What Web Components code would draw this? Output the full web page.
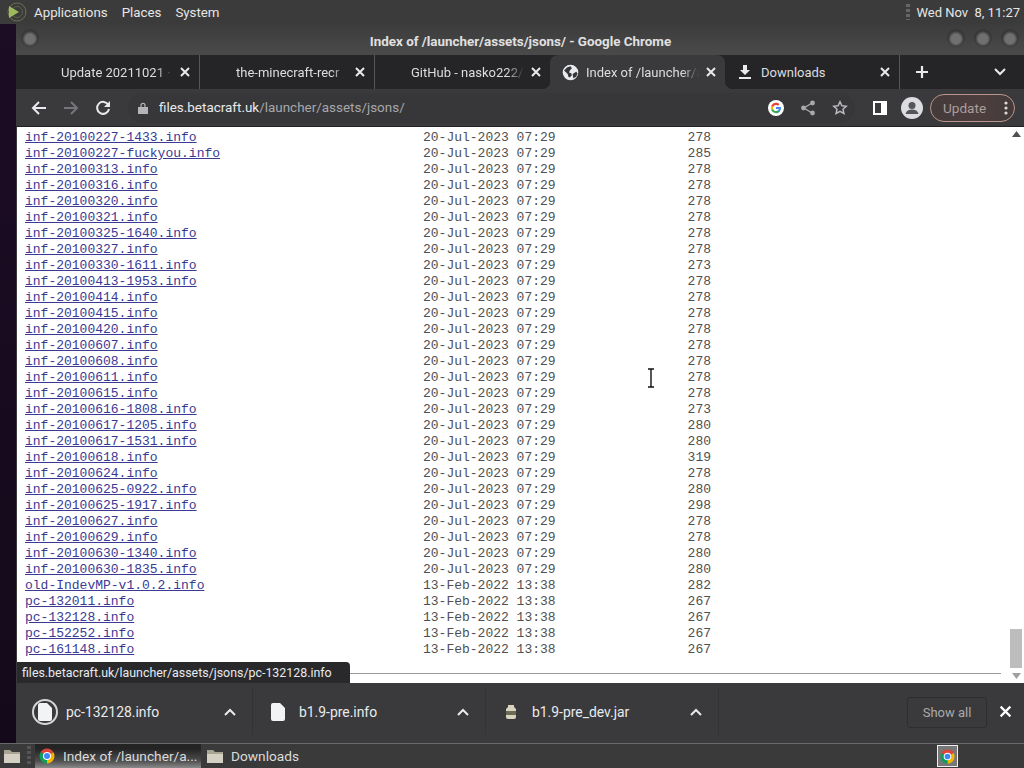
<!DOCTYPE html>
<html>
<head>
<meta charset="utf-8">
<title>Index of /launcher/assets/jsons/</title>
<style>
    html, body { margin: 0; height: 100%; background: #1a0b1f; overflow: hidden; }
    body { font-family: Roboto, sans-serif; }
    #screen { position: relative; width: 1024px; height: 768px; display: flex; flex-direction: column; overflow: hidden; }
    #middle { flex: 1; display: flex; min-height: 0; }
    #cursor { position: absolute; left: 647px; top: 368px; }
</style>
</head>
<body>
<div id="screen">
    <top-panel></top-panel>
    <div id="middle">
        <desktop-strip></desktop-strip>
        <browser-window>Index of /launcher/assets/jsons/ - Google Chrome</browser-window>
    </div>
    <task-bar></task-bar>
    <svg id="cursor" width="8" height="20" viewBox="0 0 8 20">
        <path d="M1 1h6M4 1v18M1 19h6" fill="none" stroke="#fff" stroke-width="3.4"/>
        <path d="M1 1h6M4 1v18M1 19h6" fill="none" stroke="#111" stroke-width="1.4"/>
    </svg>
</div>

<script>
const icons = {
    chrome: `<svg width="20" height="20" viewBox="0 0 24 24"><path fill="#db4437" d="M12 12 3.34 7A10 10 0 0 1 20.66 7Z"/><path fill="#f4b400" d="M12 12 20.66 7A10 10 0 0 1 12 22Z"/><path fill="#0f9d58" d="M12 12V22A10 10 0 0 1 3.34 7Z"/><circle cx="12" cy="12" r="5.4" fill="#fff"/><circle cx="12" cy="12" r="4" fill="#4285f4"/></svg>`,
    globe: `<svg width="17" height="17" viewBox="0 0 24 24"><circle cx="12" cy="12" r="11" fill="#e8eaed"/><path fill="#35363a" d="M3 9l4-4 5-2 2 3-3 3-1 3 3 1 1 3-3 3-2-1-1-4zM15 14l5-3 2 2-2 5-4 2z"/></svg>`,
    download: `<svg width="16" height="16" viewBox="0 0 16 16"><path fill="#e8eaed" d="M6 1h4v5h3l-5 5-5-5h3zM2 13h12v2H2z"/></svg>`,
    close: `<svg width="12" height="12" viewBox="0 0 12 12"><path d="M2 2l8 8M10 2l-8 8" stroke="#e8eaed" stroke-width="2" fill="none"/></svg>`,
    file: `<svg width="14" height="18" viewBox="0 0 14 18"><path fill="#f1f3f4" d="M2 0h7l5 5v11a2 2 0 0 1-2 2H2a2 2 0 0 1-2-2V2a2 2 0 0 1 2-2z"/></svg>`,
    jar: `<svg width="10" height="14" viewBox="0 0 10 14"><path fill="#d9d4c0" d="M2 0h6v2l2 2v8a2 2 0 0 1-2 2H2a2 2 0 0 1-2-2V4l2-2z"/><path fill="#6b6a55" d="M0 6h10v4H0z"/></svg>`,
    chevUp: `<svg width="12" height="8" viewBox="0 0 12 8"><path d="M1 7l5-5 5 5" stroke="#e8eaed" stroke-width="2" fill="none"/></svg>`,
    folder: `<svg width="18" height="16" viewBox="0 0 18 16"><path fill="#a8a594" d="M1 2h6l2 2h8v11H1z"/><path fill="#d4d1c4" d="M1 6h16v9H1z"/></svg>`
};

class TopPanel extends HTMLElement {
    constructor() {
        super();
        this.attachShadow({ mode: 'open' });
    }
    connectedCallback() {
        this.shadowRoot.innerHTML = `
            <style>
                :host { display: flex; align-items: center; height: 24px; flex: none; background: #3b3b3b; color: #e6e6e6; font: 13.3px Roboto, sans-serif; padding: 0 4px 0 7px; box-sizing: border-box; }
                svg { margin-right: 7px; flex: none; }
                span { margin-right: 14px; }
                .grip { width: 4px; height: 16px; margin-right: 6px; background: repeating-linear-gradient(#666 0 3px, transparent 3px 5px); }
                .clock { margin: 0 0 0 auto; display: flex; align-items: center; font-size: 13px; }
                .clock span { margin: 0; }
            </style>
            <svg width="20" height="20" viewBox="0 0 20 20">
                <circle cx="10" cy="10" r="9" fill="none" stroke="#6c7050" stroke-width="1"/>
                <circle cx="10" cy="10" r="5.500" fill="none" stroke="#5c6048" stroke-width="1"/>
                <path d="M2 4l10 6-10 6z" fill="#9dbb5a"/>
            </svg>
            <span>Applications</span><span>Places</span><span>System</span>
            <div class="clock"><div class="grip"></div><span>Wed Nov&nbsp; 8, 11:27</span></div>
        `;
    }
}

class DesktopStrip extends HTMLElement {
    constructor() {
        super();
        this.attachShadow({ mode: 'open' });
    }
    connectedCallback() {
        this.shadowRoot.innerHTML = `
            <style>:host { display: block; width: 16px; flex: none; background: linear-gradient(#1c0c24, #14091a); }</style>
        `;
    }
}

class BrowserWindow extends HTMLElement {
    constructor() {
        super();
        this.attachShadow({ mode: 'open' });
    }
    connectedCallback() {
        this.shadowRoot.innerHTML = `
            <style>
                :host { display: flex; flex-direction: column; flex: 1; min-width: 0; background: #3a3a3c; }
                .title { display: flex; align-items: center; height: 31px; flex: none; padding: 0 5px 0 5px; box-sizing: border-box; background: linear-gradient(#3c3c3c, #4a4a4a); color: #e0e0e0; font: bold 13.4px Roboto, sans-serif; }
                .title div.text { flex: 1; text-align: center; padding: 3px 0 0 64px; white-space: nowrap; }
                .knob { width: 18px; height: 18px; border-radius: 50%; flex: none; margin: 0 0 3px 9px; background: radial-gradient(circle at 50% 55%, #707070 0 35%, #3a3a3a 58%, #353535 72%, #565656 100%); }
                .knob:first-child { margin-left: 0; }
            </style>
            <div class="title">
                <div class="knob"></div>
                <div class="text"><slot></slot></div>
                <div class="knob"></div><div class="knob"></div><div class="knob"></div>
            </div>
            <tab-strip></tab-strip>
            <nav-toolbar></nav-toolbar>
            <dir-listing></dir-listing>
            <download-bar></download-bar>
        `;
    }
}

class TabStrip extends HTMLElement {
    constructor() {
        super();
        this.attachShadow({ mode: 'open' });
    }
    connectedCallback() {
        this.shadowRoot.innerHTML = `
            <style>
                :host { display: flex; align-items: stretch; height: 34px; flex: none; background: #252527; padding-left: 9px; box-sizing: border-box; color: #e8eaed; }
                .new { margin-left: 15px; width: 18px; display: flex; align-items: center; }
                .more { margin-left: 55px; width: 24px; display: flex; align-items: center; justify-content: center; }
            </style>
            <browser-tab sep>Update 20211021 · r</browser-tab>
            <browser-tab sep>the-minecraft-recr</browser-tab>
            <browser-tab>GitHub - nasko222/</browser-tab>
            <browser-tab active><span slot="icon">${icons.globe}</span>Index of /launcher/a</browser-tab>
            <browser-tab sep nofade><span slot="icon">${icons.download}</span>Downloads</browser-tab>
            <div class="new"><svg width="14" height="14" viewBox="0 0 14 14"><path d="M7 1v12M1 7h12" stroke="#e8eaed" stroke-width="2.2"/></svg></div>
            <div class="more"><svg width="12" height="8" viewBox="0 0 12 8"><path d="M1 1l5 5 5-5" stroke="#e8eaed" stroke-width="2" fill="none"/></svg></div>
        `;
    }
}

class BrowserTab extends HTMLElement {
    constructor() {
        super();
        this.attachShadow({ mode: 'open' });
    }
    connectedCallback() {
        this.shadowRoot.innerHTML = `
            <style>
                :host { display: flex; align-items: center; width: 175px; flex: none; box-sizing: border-box; padding: 0 8px 0 12px; font: 13px Roboto, sans-serif; color: #dcdde0; position: relative; }
                :host([active]) { background: #3a3a3c; border-radius: 8px 8px 0 0; }
                :host([active])::before, :host([active])::after { content: ""; position: absolute; bottom: 0; width: 8px; height: 8px; }
                :host([active])::before { left: -8px; background: radial-gradient(circle at 0 0, transparent 8px, #3a3a3c 8.5px); }
                :host([active])::after { right: -8px; background: radial-gradient(circle at 100% 0, transparent 8px, #3a3a3c 8.5px); }
                :host([sep]) { border-right: 1px solid #55555a; }
                .ic { width: 24px; height: 17px; flex: none; display: flex; align-items: center; }
                ::slotted([slot=icon]) { display: flex; }
                .label { flex: 1; min-width: 0; overflow: hidden; white-space: nowrap; -webkit-mask-image: linear-gradient(to right, #000 85%, transparent 100%); mask-image: linear-gradient(to right, #000 85%, transparent 100%); }
                :host([nofade]) .label { -webkit-mask-image: none; mask-image: none; }
                .x { flex: none; display: flex; margin-left: 6px; }
            </style>
            <div class="ic"><slot name="icon"></slot></div>
            <div class="label"><slot></slot></div>
            <div class="x">${icons.close}</div>
        `;
    }
}

class NavToolbar extends HTMLElement {
    constructor() {
        super();
        this.attachShadow({ mode: 'open' });
    }
    connectedCallback() {
        this.shadowRoot.innerHTML = `
            <style>
                :host { display: flex; align-items: center; height: 38px; flex: none; box-sizing: border-box; background: #3a3a3c; border-bottom: 1px solid #222; padding: 0 9px 0 14px; font: 13.45px Roboto, sans-serif; color: #e8eaed; }
                .btn { width: 18px; height: 18px; flex: none; margin-right: 14px; display: flex; align-items: center; justify-content: center; }
                .omni { flex: none; width: 727px; height: 30px; margin-left: 2px; border-radius: 15px; background: #37373a; display: flex; align-items: center; box-sizing: border-box; padding-left: 10px; }
                .lock { margin-right: 11px; display: flex; }
                .url { flex: 1; white-space: nowrap; }
                .url i { font-style: normal; color: #a6a7aa; }
                .end { display: flex; align-items: center; gap: 15px; margin-right: 7px; }
                .end svg { display: block; }
                .side { margin-left: 18px; display: flex; }
                .avatar { margin-left: 14px; display: flex; }
                .update { margin-left: 7px; width: 85px; height: 28px; box-sizing: border-box; border: 1px solid #b9958d; border-radius: 14px; background: linear-gradient(90deg, #443a3a, #4d3e3e 60%, #433a3a); color: #ab9e9c; display: flex; align-items: center; padding: 0 6px 0 12px; justify-content: space-between; font-size: 13.6px; }
            </style>
            <div class="btn"><svg width="16" height="16" viewBox="0 0 16 16"><path d="M15 8H2M8 2 2 8l6 6" stroke="#e8eaed" stroke-width="2" fill="none"/></svg></div>
            <div class="btn"><svg width="16" height="16" viewBox="0 0 16 16"><path d="M1 8h13M8 2l6 6-6 6" stroke="#75767a" stroke-width="2" fill="none"/></svg></div>
            <div class="btn"><svg width="16" height="16" viewBox="0 0 16 16"><path d="M13.4 5A6 6 0 1 0 14 9" stroke="#e8eaed" stroke-width="2" fill="none"/><path d="M15 1v6H9z" fill="#e8eaed"/></svg></div>
            <div class="omni">
                <span class="lock"><svg width="10" height="12" viewBox="0 0 10 12"><path fill="#b4b5b8" d="M0 5h10v7H0zM2.4 5V3.4a2.6 2.6 0 0 1 5.2 0V5H6.4V3.4a1.4 1.4 0 0 0-2.8 0V5z"/></svg></span>
                <span class="url">files.betacraft.uk<i>/launcher/assets/jsons/</i></span>
                <div class="end">
                    <svg width="16" height="16" viewBox="0 0 24 24"><circle cx="12" cy="12" r="12" fill="#fff"/><g transform="translate(3.6 3.6) scale(.7)"><path fill="#4285F4" d="M22.56 12.25c0-.78-.07-1.53-.2-2.25H12v4.26h5.92c-.26 1.37-1.04 2.53-2.21 3.31v2.77h3.57c2.08-1.92 3.28-4.74 3.28-8.09z"/><path fill="#34A853" d="M12 23c2.97 0 5.46-.98 7.28-2.66l-3.57-2.77c-.98.66-2.23 1.06-3.71 1.06-2.86 0-5.29-1.93-6.16-4.53H2.18v2.84C3.99 20.53 7.7 23 12 23z"/><path fill="#FBBC05" d="M5.84 14.09c-.22-.66-.35-1.36-.35-2.09s.13-1.43.35-2.09V7.07H2.18C1.43 8.55 1 10.22 1 12s.43 3.45 1.18 4.93l3.66-2.84z"/><path fill="#EA4335" d="M12 5.38c1.62 0 3.06.56 4.21 1.64l3.15-3.15C17.45 2.09 14.97 1 12 1 7.7 1 3.99 3.47 2.18 7.07l3.66 2.84c.87-2.6 3.3-4.53 6.16-4.53z"/></g></svg>
                    <svg width="18" height="16" viewBox="0 0 18 16"><path d="M13 3 5 8l8 5" stroke="#a8a9ac" stroke-width="1.4" fill="none"/><circle cx="13.5" cy="3" r="2.4" fill="#a8a9ac"/><circle cx="4.5" cy="8" r="2.4" fill="#a8a9ac"/><circle cx="13.5" cy="13" r="2.4" fill="#a8a9ac"/></svg>
                    <svg width="16" height="16" viewBox="0 0 16 16"><path d="M8 1.8l1.9 4 4.3.5-3.2 2.9.9 4.3L8 11.3l-3.9 2.2.9-4.3L1.800 6.300l4.300-.5z" stroke="#b8b9bc" stroke-width="1.5" fill="none"/></svg>
                </div>
            </div>
            <div class="side"><svg width="14" height="14" viewBox="0 0 14 14"><path fill-rule="evenodd" fill="#fff" d="M0 0h14v14H0zM2 2v10h6V2z"/></svg></div>
            <div class="avatar"><svg width="22" height="22" viewBox="0 0 22 22"><circle cx="11" cy="11" r="11" fill="#dcdde0"/><circle cx="11" cy="8.500" r="3.500" fill="#54565c"/><path d="M4.500 17c.6-3 3.400-4.400 6.500-4.400s5.900 1.400 6.500 4.400z" fill="#54565c"/></svg></div>
            <div class="update"><span>Update</span><svg width="4" height="14" viewBox="0 0 4 14"><circle cx="2" cy="2" r="1.600" fill="#e0d8d6"/><circle cx="2" cy="7" r="1.600" fill="#e0d8d6"/><circle cx="2" cy="12" r="1.600" fill="#e0d8d6"/></svg></div>
        `;
    }
}

const july = '20-Jul-2023 07:29';
const feb = '13-Feb-2022 13:38';
const files = [
    ['inf-20100227-1433.info', july, 278], ['inf-20100227-fuckyou.info', july, 285],
    ['inf-20100313.info', july, 278], ['inf-20100316.info', july, 278],
    ['inf-20100320.info', july, 278], ['inf-20100321.info', july, 278],
    ['inf-20100325-1640.info', july, 278], ['inf-20100327.info', july, 278],
    ['inf-20100330-1611.info', july, 273], ['inf-20100413-1953.info', july, 278],
    ['inf-20100414.info', july, 278], ['inf-20100415.info', july, 278],
    ['inf-20100420.info', july, 278], ['inf-20100607.info', july, 278],
    ['inf-20100608.info', july, 278], ['inf-20100611.info', july, 278],
    ['inf-20100615.info', july, 278], ['inf-20100616-1808.info', july, 273],
    ['inf-20100617-1205.info', july, 280], ['inf-20100617-1531.info', july, 280],
    ['inf-20100618.info', july, 319], ['inf-20100624.info', july, 278],
    ['inf-20100625-0922.info', july, 280], ['inf-20100625-1917.info', july, 298],
    ['inf-20100627.info', july, 278], ['inf-20100629.info', july, 278],
    ['inf-20100630-1340.info', july, 280], ['inf-20100630-1835.info', july, 280],
    ['old-IndevMP-v1.0.2.info', feb, 282], ['pc-132011.info', feb, 267],
    ['pc-132128.info', feb, 267], ['pc-152252.info', feb, 267], ['pc-161148.info', feb, 267]
];

class DirListing extends HTMLElement {
    constructor() {
        super();
        this.attachShadow({ mode: 'open' });
    }
    connectedCallback() {
        const rows = files.map(f => `
            <a href="#">${f[0]}</a><span>${f[1]}</span><span class="size">${f[2]}</span>`).join('');
        this.shadowRoot.innerHTML = `
            <style>
                :host { display: flex; flex: 1; min-height: 0; background: #fff; position: relative; margin-left: 1px; overflow: hidden; }
                .page { flex: 1; min-width: 0; padding: 3px 8px 0 8px; font: 13px/16px "Liberation Mono", monospace; color: #505050; }
                .rows { display: grid; grid-template-columns: 398px 176px 112px; justify-content: start; }
                a { color: #3a3a94; justify-self: start; }
                .size { text-align: right; }
                hr { margin: 15px 0 0 0; height: 0; border: 0; border-top: 1px solid #9a9a9a; }
                .bar { width: 15px; flex: none; display: flex; flex-direction: column; align-items: center; background: #fff; }
                .track { flex: 1; width: 100%; display: flex; flex-direction: column; justify-content: flex-end; padding: 0 2px 1px 1px; box-sizing: border-box; }
                .thumb { height: 39px; background: #bdbdbd; }
                .arrow { height: 14px; display: flex; align-items: center; justify-content: center; }
                .status { position: absolute; left: 0; bottom: 0; height: 21px; width: 333px; padding-left: 5px; box-sizing: border-box; background: #29292c; color: #e8eaed; font: 12.4px/21px Roboto, sans-serif; border-radius: 0 4px 0 0; white-space: nowrap; }
            </style>
            <div class="page">
                <div class="rows">${rows}</div>
                <hr>
            </div>
            <div class="bar">
                <div class="arrow"><svg width="9" height="6" viewBox="0 0 9 6"><path d="M4.500 0 9 6H0z" fill="#505050"/></svg></div>
                <div class="track"><div class="thumb"></div></div>
                <div class="arrow"><svg width="9" height="6" viewBox="0 0 9 6"><path d="M0 0h9L4.500 6z" fill="#a0a0a0"/></svg></div>
            </div>
            <div class="status">files.betacraft.uk/launcher/assets/jsons/pc-132128.info</div>
        `;
    }
}

class DownloadBar extends HTMLElement {
    constructor() {
        super();
        this.attachShadow({ mode: 'open' });
    }
    connectedCallback() {
        this.shadowRoot.innerHTML = `
            <style>
                :host { display: flex; align-items: stretch; height: 60px; flex: none; background: #3a3a3c; box-sizing: border-box; color: #e8eaed; font: 13.9px Roboto, sans-serif; padding: 5px 0 8px; }
                .all { margin: 9px 0 0 188px; width: 80px; height: 31px; box-sizing: border-box; border: 1px solid #2e2e30; border-radius: 3px; color: #a9aaad; font-size: 13px; display: flex; align-items: center; justify-content: center; }
                .x { margin: 0 0 0 12px; display: flex; align-items: center; }
            </style>
            <download-item style="width:237px" ring><span slot="icon">${icons.file}</span>pc-132128.info</download-item>
            <download-item style="width:233px"><span slot="icon">${icons.file}</span>b1.9-pre.info</download-item>
            <download-item style="width:233px"><span slot="icon">${icons.jar}</span>b1.9-pre_dev.jar</download-item>
            <div class="all">Show all</div>
            <div class="x"><svg width="13" height="13" viewBox="0 0 12 12"><path d="M1.500 1.500l9 9M10.500 1.500l-9 9" stroke="#fff" stroke-width="2" fill="none"/></svg></div>
        `;
    }
}

class DownloadItem extends HTMLElement {
    constructor() {
        super();
        this.attachShadow({ mode: 'open' });
    }
    connectedCallback() {
        this.shadowRoot.innerHTML = `
            <style>
                :host { display: flex; align-items: center; flex: none; box-sizing: border-box; border-right: 1px solid #333335; padding: 0 16px 0 15px; }
                .ic { width: 20px; height: 26px; margin-right: 11px; flex: none; display: flex; align-items: center; justify-content: center; }
                :host([ring]) { padding-left: 16px; }
                :host([ring]) .ic { width: 26px; border-radius: 50%; box-sizing: border-box; border: 2px solid #d5d6d8; margin-right: 8px; }
                ::slotted([slot=icon]) { display: flex; }
                .name { flex: 1; white-space: nowrap; }
                .chev { display: flex; }
            </style>
            <div class="ic"><slot name="icon"></slot></div>
            <div class="name"><slot></slot></div>
            <div class="chev">${icons.chevUp}</div>
        `;
    }
}

class TaskBar extends HTMLElement {
    constructor() {
        super();
        this.attachShadow({ mode: 'open' });
    }
    connectedCallback() {
        this.shadowRoot.innerHTML = `
            <style>
                :host { display: flex; align-items: center; height: 25px; flex: none; box-sizing: border-box; background: #3a3a3a; border-top: 1px solid #6a6a6a; color: #dcdcdc; font: 13.7px Roboto, sans-serif; }
                .show { width: 22px; display: flex; justify-content: center; margin-left: 1px; }
                .grip { width: 4px; height: 20px; margin: 0 4px 0 4px; background: repeating-linear-gradient(#555 0 3px, transparent 3px 5px); }
                .tray { margin-left: auto; display: flex; align-items: center; height: 100%; }
                .thumb { width: 21px; height: 22px; box-sizing: border-box; border: 1px solid #eee; background: #777; display: flex; align-items: center; justify-content: center; margin-right: 66px; }
                .thumb svg { width: 17px; height: 17px; }
            </style>
            <div class="show">${icons.folder}</div>
            <div class="grip"></div>
            <task-button active><span slot="icon">${icons.chrome.replace('width="20" height="20"', 'width="18" height="18"')}</span>Index of /launcher/a...</task-button>
            <task-button><span slot="icon">${icons.folder}</span>Downloads</task-button>
            <div class="tray"><div class="thumb">${icons.chrome}</div></div>
        `;
    }
}

class TaskButton extends HTMLElement {
    constructor() {
        super();
        this.attachShadow({ mode: 'open' });
    }
    connectedCallback() {
        this.shadowRoot.innerHTML = `
            <style>
                :host { display: flex; align-items: center; height: 100%; width: 166px; flex: none; box-sizing: border-box; white-space: nowrap; }
                :host([active]) { background: linear-gradient(#242424 20%, #4e4e4e 70%, #8a8a8a); padding-left: 3px; }
                :host(:not([active])) { padding-left: 5px; }
                .ic { width: 25px; flex: none; display: flex; align-items: center; }
                ::slotted([slot=icon]) { display: flex; }
            </style>
            <div class="ic"><slot name="icon"></slot></div>
            <slot></slot>
        `;
    }
}

customElements.define('top-panel', TopPanel);
customElements.define('desktop-strip', DesktopStrip);
customElements.define('browser-window', BrowserWindow);
customElements.define('tab-strip', TabStrip);
customElements.define('browser-tab', BrowserTab);
customElements.define('nav-toolbar', NavToolbar);
customElements.define('dir-listing', DirListing);
customElements.define('download-bar', DownloadBar);
customElements.define('download-item', DownloadItem);
customElements.define('task-bar', TaskBar);
customElements.define('task-button', TaskButton);
</script>
</body>
</html>
